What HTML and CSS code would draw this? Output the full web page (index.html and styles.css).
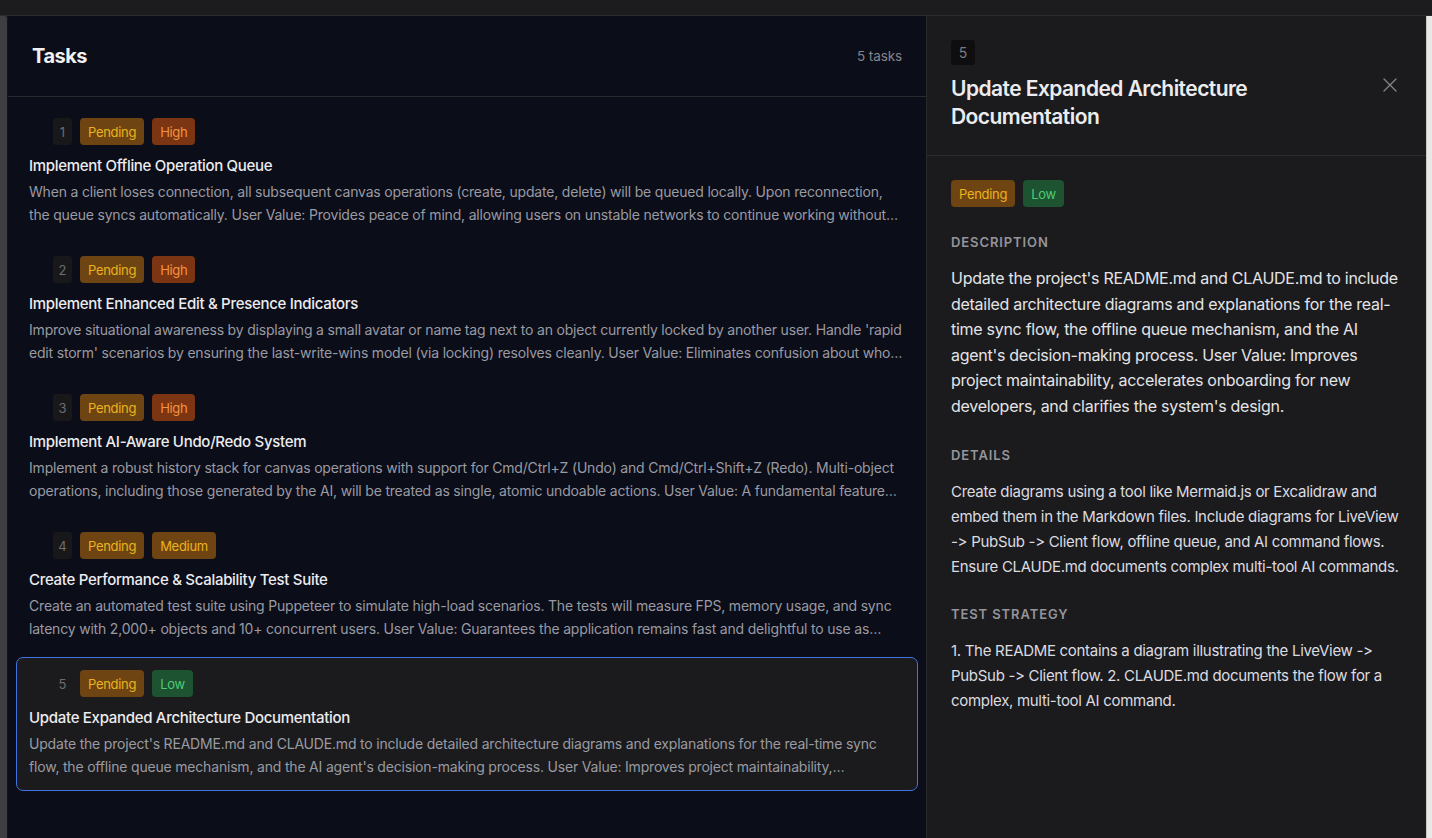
FILE: index.html
```html
<!DOCTYPE html>
<html lang="en">
<head>
<meta charset="utf-8">
<title>Tasks</title>
<link rel="stylesheet" href="styles.css">
</head>
<body>
<div class="topbar"></div>
<div class="main">
  <div class="gutter"></div>
  <section class="tasks">
    <header class="tasks-header">
      <h1 class="tasks-title">Tasks</h1>
      <span class="tasks-count">5 tasks</span>
    </header>
    <div class="task-list">
      <article class="task-card">
        <div class="task-meta">
          <span class="task-num">1</span>
          <span class="badge badge-pending">Pending</span>
          <span class="badge badge-high">High</span>
        </div>
        <h2 class="task-name">Implement Offline Operation Queue</h2>
        <p class="task-desc">When a client loses connection, all subsequent canvas operations (create, update, delete) will be queued locally. Upon reconnection, the queue syncs automatically. User Value: Provides peace of mind, allowing users on unstable networks to continue working without interruption or fear of losing their work.</p>
      </article>
      <article class="task-card">
        <div class="task-meta">
          <span class="task-num">2</span>
          <span class="badge badge-pending">Pending</span>
          <span class="badge badge-high">High</span>
        </div>
        <h2 class="task-name">Implement Enhanced Edit &amp; Presence Indicators</h2>
        <p class="task-desc">Improve situational awareness by displaying a small avatar or name tag next to an object currently locked by another user. Handle 'rapid edit storm' scenarios by ensuring the last-write-wins model (via locking) resolves cleanly. User Value: Eliminates confusion about who is editing what.</p>
      </article>
      <article class="task-card">
        <div class="task-meta">
          <span class="task-num">3</span>
          <span class="badge badge-pending">Pending</span>
          <span class="badge badge-high">High</span>
        </div>
        <h2 class="task-name">Implement AI-Aware Undo/Redo System</h2>
        <p class="task-desc">Implement a robust history stack for canvas operations with support for Cmd/Ctrl+Z (Undo) and Cmd/Ctrl+Shift+Z (Redo). Multi-object operations, including those generated by the AI, will be treated as single, atomic undoable actions. User Value: A fundamental feature for any creative tool.</p>
      </article>
      <article class="task-card">
        <div class="task-meta">
          <span class="task-num">4</span>
          <span class="badge badge-pending">Pending</span>
          <span class="badge badge-medium">Medium</span>
        </div>
        <h2 class="task-name">Create Performance &amp; Scalability Test Suite</h2>
        <p class="task-desc">Create an automated test suite using Puppeteer to simulate high-load scenarios. The tests will measure FPS, memory usage, and sync latency with 2,000+ objects and 10+ concurrent users. User Value: Guarantees the application remains fast and delightful to use as projects grow.</p>
      </article>
      <article class="task-card is-selected">
        <div class="task-meta">
          <span class="task-num">5</span>
          <span class="badge badge-pending">Pending</span>
          <span class="badge badge-low">Low</span>
        </div>
        <h2 class="task-name">Update Expanded Architecture Documentation</h2>
        <p class="task-desc">Update the project's README.md and CLAUDE.md to include detailed architecture diagrams and explanations for the real-time sync flow, the offline queue mechanism, and the AI agent's decision-making process. User Value: Improves project maintainability, accelerates onboarding for new developers, and clarifies the system's design.</p>
      </article>
    </div>
  </section>
  <aside class="detail">
    <header class="detail-header">
      <span class="detail-num">5</span>
      <div class="detail-title-row">
        <h2 class="detail-title">Update Expanded Architecture Documentation</h2>
        <button class="close-btn" aria-label="Close">
          <svg width="16" height="16" viewBox="0 0 16 16" fill="none" stroke="currentColor" stroke-width="1.3" stroke-linecap="round"><path d="M2 2L14 14M14 2L2 14"/></svg>
        </button>
      </div>
    </header>
    <div class="detail-body">
      <div class="detail-badges">
        <span class="badge badge-pending">Pending</span>
        <span class="badge badge-low">Low</span>
      </div>
      <section class="detail-section">
        <h3 class="section-label">Description</h3>
        <p class="section-text section-text-lg">Update the project's README.md and CLAUDE.md to include detailed architecture diagrams and explanations for the real-time sync flow, the offline queue mechanism, and the AI agent's decision-making process. User Value: Improves project maintainability, accelerates onboarding for new developers, and clarifies the system's design.</p>
      </section>
      <section class="detail-section">
        <h3 class="section-label">Details</h3>
        <p class="section-text">Create diagrams using a tool like Mermaid.js or Excalidraw and embed them in the Markdown files. Include diagrams for LiveView -&gt; PubSub -&gt; Client flow, offline queue, and AI command flows. Ensure CLAUDE.md documents complex multi-tool AI commands.</p>
      </section>
      <section class="detail-section">
        <h3 class="section-label">Test Strategy</h3>
        <p class="section-text">1. The README contains a diagram illustrating the LiveView -&gt; PubSub -&gt; Client flow. 2. CLAUDE.md documents the flow for a complex, multi-tool AI command.</p>
      </section>
    </div>
  </aside>
  <div class="edge"></div>
</div>
</body>
</html>
```
FILE: styles.css
```css
* { box-sizing: border-box; }

html, body {
  margin: 0;
  padding: 0;
  height: 100%;
  overflow: hidden;
}

body {
  background: #1c1c1e;
  font-family: "Inter", "Noto Sans", "Liberation Sans", sans-serif;
  font-feature-settings: "calt" 0;
  font-variant-ligatures: none;
  color: #e4e4e7;
  -webkit-font-smoothing: antialiased;
}

.topbar {
  height: 16px;
  background: #1c1c1e;
  border-bottom: 1px solid #2c2c2f;
}

.main {
  display: flex;
  height: 822px;
}

.gutter {
  width: 8px;
  flex: none;
  background: #3e3e42;
  border-right: 1px solid #141418;
  border-top-right-radius: 3px;
}

.tasks {
  flex: 1;
  min-width: 0;
  background: #0b0d19;
  display: flex;
  flex-direction: column;
}

.tasks-header {
  height: 81px;
  flex: none;
  display: flex;
  align-items: center;
  justify-content: space-between;
  padding: 0 24px;
  border-bottom: 1px solid #2a2a2e;
}

.tasks-title {
  margin: 0;
  font-size: 20px;
  font-weight: 700;
  color: #f1f1f3;
  letter-spacing: -0.5px;
}

.tasks-count {
  font-size: 13.5px;
  color: #85858c;
  letter-spacing: -0.1px;
}

.task-list {
  padding: 8px;
  display: flex;
  flex-direction: column;
  gap: 4px;
}

.task-card {
  border: 1px solid transparent;
  border-radius: 7px;
  padding: 12px 12px;
}

.task-card.is-selected {
  background: #1b1b1d;
  border-color: #3f74e0;
}

.task-meta {
  display: flex;
  align-items: center;
  gap: 8px;
  padding-left: 24px;
}

.task-num {
  height: 27px;
  min-width: 19px;
  padding: 0 5px;
  display: inline-flex;
  align-items: center;
  justify-content: center;
  background: #18181b;
  border-radius: 3px;
  font-size: 13px;
  color: #6c6c72;
}

.is-selected .task-num {
  background: transparent;
}

.badge {
  height: 27px;
  padding: 0 8px;
  display: inline-flex;
  align-items: center;
  border-radius: 4px;
  font-size: 13px;
  font-weight: 400;
  letter-spacing: -0.3px;
}

.badge-pending,
.badge-medium {
  background: #6e4512;
  color: #ebb31c;
}

.badge-high {
  background: #7b3512;
  color: #f6933d;
}

.badge-low {
  background: #1d5331;
  color: #4ecb76;
}

.task-name {
  margin: 10px 0 3px;
  font-size: 15px;
  line-height: 22px;
  font-weight: 500;
  color: #ececef;
  letter-spacing: -0.3px;
}

.task-desc {
  margin: 0;
  font-size: 14px;
  line-height: 23px;
  letter-spacing: -0.19px;
  color: #9a9aa2;
  display: -webkit-box;
  -webkit-line-clamp: 2;
  -webkit-box-orient: vertical;
  overflow: hidden;
}

.detail {
  width: 500px;
  flex: none;
  background: #1b1b1d;
  border-left: 1px solid #2a2a2d;
  display: flex;
  flex-direction: column;
}

.detail-header {
  padding: 24px 24px 24px;
  border-bottom: 1px solid #2c2c2f;
}

.detail-num {
  display: inline-flex;
  align-items: center;
  justify-content: center;
  height: 25px;
  min-width: 24px;
  padding: 0 7px;
  background: #0e0e10;
  border-radius: 3px;
  font-size: 14px;
  color: #7a7a80;
}

.detail-title-row {
  display: flex;
  align-items: flex-start;
  justify-content: space-between;
  gap: 16px;
  margin-top: 10px;
}

.detail-title {
  margin: 0;
  font-size: 21px;
  line-height: 28px;
  font-weight: 600;
  color: #ececef;
  max-width: 330px;
  letter-spacing: -0.55px;
}

.close-btn {
  margin-top: 0;
  margin-right: 2px;
  width: 20px;
  height: 20px;
  padding: 0;
  border: 0;
  background: transparent;
  color: #85858c;
  display: flex;
  align-items: center;
  justify-content: center;
}

.detail-body {
  padding: 24px;
}

.detail-badges {
  display: flex;
  gap: 8px;
}

.detail-section {
  margin-top: 25px;
}

.section-label {
  margin: 0 0 14px;
  font-size: 13px;
  line-height: 20px;
  font-weight: 600;
  letter-spacing: 0.9px;
  text-transform: uppercase;
  color: #94949b;
}

.section-text {
  margin: 0;
  font-size: 15px;
  line-height: 25px;
  letter-spacing: -0.3px;
  color: #dcdce0;
}

.section-text-lg {
  font-size: 16px;
  line-height: 25.6px;
  letter-spacing: -0.28px;
  color: #e4e4e7;
}

.edge {
  width: 6px;
  flex: none;
  background: #e8e8e6;
  border-left: 1px solid #c8c8c6;
}
```
